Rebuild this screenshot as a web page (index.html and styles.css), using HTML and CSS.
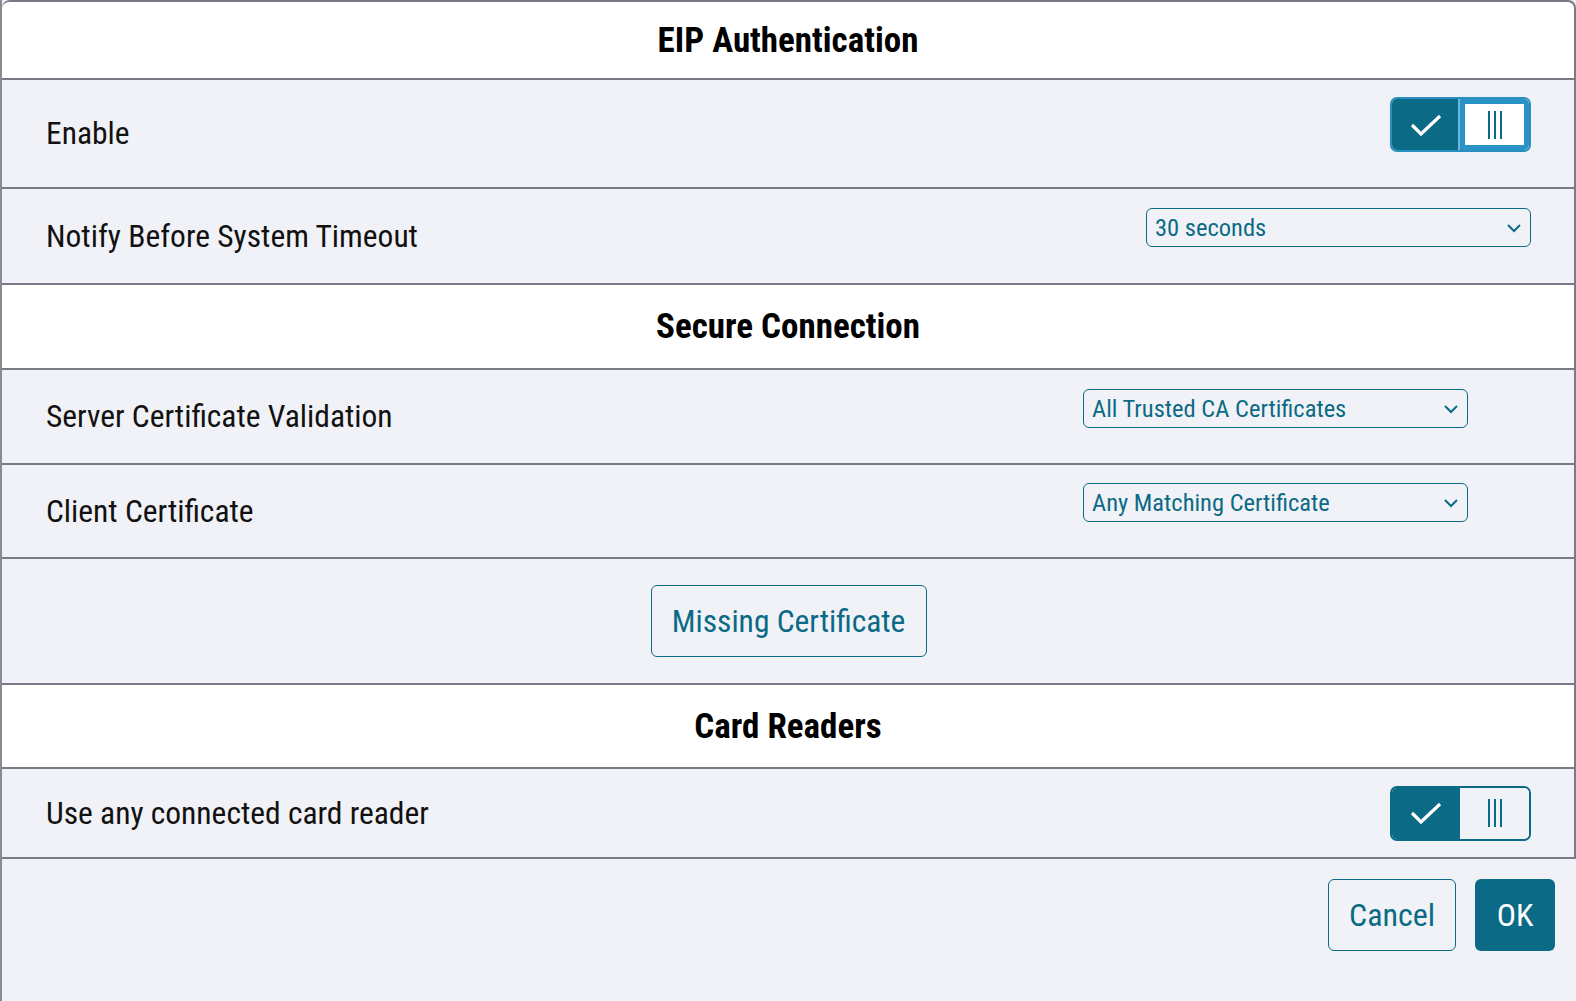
FILE: index.html
```html
<!DOCTYPE html>
<html lang="en">
<head>
  <meta charset="UTF-8">
  <title>EIP Authentication</title>
  <link rel="stylesheet" href="styles.css">
</head>
<body>
  <div class="dialog">
    <div class="panel">
      <div class="section-title first">EIP Authentication</div>
      <div class="row tall">
        <span class="label">Enable</span>
        <div class="toggle focused">
          <span class="toggle-on">
            <svg width="34" height="24" viewBox="0 0 34 24"><path d="M3 12 L12 21 L31 3" fill="none" stroke="#fff" stroke-width="3.2"/></svg>
          </span>
          <span class="toggle-off"><i></i><i></i><i></i></span>
        </div>
      </div>
      <div class="row">
        <span class="label">Notify Before System Timeout</span>
        <div class="select wide">
          <span>30 seconds</span>
          <svg class="caret" width="16" height="10" viewBox="0 0 16 10"><path d="M2 2 L8 8 L14 2" fill="none" stroke="#0b6a85" stroke-width="2"/></svg>
        </div>
      </div>

      <div class="section-title">Secure Connection</div>
      <div class="row mid">
        <span class="label">Server Certificate Validation</span>
        <div class="select indented">
          <span>All Trusted CA Certificates</span>
          <svg class="caret" width="16" height="10" viewBox="0 0 16 10"><path d="M2 2 L8 8 L14 2" fill="none" stroke="#0b6a85" stroke-width="2"/></svg>
        </div>
      </div>
      <div class="row short">
        <span class="label">Client Certificate</span>
        <div class="select indented">
          <span>Any Matching Certificate</span>
          <svg class="caret" width="16" height="10" viewBox="0 0 16 10"><path d="M2 2 L8 8 L14 2" fill="none" stroke="#0b6a85" stroke-width="2"/></svg>
        </div>
      </div>
      <div class="row center">
        <button class="btn outline big">Missing Certificate</button>
      </div>

      <div class="section-title small">Card Readers</div>
      <div class="row last">
        <span class="label">Use any connected card reader</span>
        <div class="toggle">
          <span class="toggle-on">
            <svg width="34" height="24" viewBox="0 0 34 24"><path d="M3 12 L12 21 L31 3" fill="none" stroke="#fff" stroke-width="3.2"/></svg>
          </span>
          <span class="toggle-off"><i></i><i></i><i></i></span>
        </div>
      </div>
    </div>

    <div class="actions">
      <button class="btn outline">Cancel</button>
      <button class="btn primary">OK</button>
    </div>
  </div>
</body>
</html>
```

FILE: styles.css
```css
* {
  margin: 0;
  padding: 0;
  box-sizing: border-box;
}

body {
  width: 1576px;
  height: 1001px;
  background-color: #f1f2f7;
  font-family: "Roboto Condensed", Roboto, "Liberation Sans", sans-serif;
  color: #111;
  overflow: hidden;
}

.dialog {
  height: 1001px;
  border-left: 2px solid #8a8a96;
}

.panel {
  border: 2px solid #7b7b87;
  border-left: 0;
  border-top-right-radius: 8px;
  border-top-left-radius: 8px;
}

.section-title {
  background-color: #fff;
  height: 85px;
  display: flex;
  justify-content: center;
  align-items: center;
  font-size: 35px;
  font-weight: bold;
  color: #000;
  border-bottom: 2px solid #7b7b87;
}

.section-title.first {
  height: 78px;
  border-top-left-radius: 8px;
  border-top-right-radius: 8px;
}

.section-title.small {
  height: 84px;
}

.row {
  height: 96px;
  display: flex;
  align-items: center;
  justify-content: space-between;
  padding: 0 43px 0 44px;
  border-bottom: 2px solid #7b7b87;
}

.row.tall {
  height: 109px;
}

.row.mid {
  height: 95px;
}

.row.short {
  height: 94px;
}

.row.center {
  height: 126px;
  justify-content: center;
}

.row.last {
  height: 88px;
  border-bottom: 0;
}

.label {
  font-size: 31.5px;
}

/* toggle switch */
.toggle {
  width: 141px;
  height: 55px;
  display: flex;
  border: 2px solid #0b6a85;
  border-radius: 7px;
  overflow: hidden;
}

.toggle-on {
  width: 68px;
  background-color: #0b6a85;
  display: flex;
  justify-content: center;
  align-items: center;
}

.toggle-off {
  flex: 1;
  background-color: #f1f2f7;
  display: flex;
  justify-content: center;
  align-items: center;
  gap: 4px;
}

.toggle-off i {
  width: 2px;
  height: 28px;
  background-color: #0b6a85;
}

.toggle.focused {
  align-self: flex-start;
  margin-top: 17px;
  border-color: #2a8fbf;
}

.toggle.focused .toggle-off {
  background-color: #fff;
  border: 5px solid #2a93c6;
  box-shadow: 0 0 0 2px #6cb7dc;
}

/* dropdowns */
.select {
  align-self: flex-start;
  margin-top: 19px;
  width: 385px;
  height: 39px;
  border: 1.5px solid #0b6a85;
  border-radius: 6px;
  display: flex;
  align-items: center;
  justify-content: space-between;
  padding: 0 8px 0 8px;
  color: #0b6a85;
  font-size: 24.5px;
}

.select.indented {
  margin-right: 63px;
}

.row.short .select {
  margin-top: 18px;
}

/* buttons */
.btn {
  font-family: inherit;
  font-size: 32px;
  height: 72px;
  border-radius: 6px;
  white-space: nowrap;
  cursor: pointer;
}

.btn.outline {
  background-color: transparent;
  border: 1.5px solid #0b6a85;
  color: #0b6a85;
  padding: 0 20px;
}

.btn.big {
  width: 276px;
  font-size: 31.5px;
}

.btn.primary {
  background-color: #0b6a85;
  border: 0;
  color: #fff;
  width: 80px;
}

.actions {
  display: flex;
  justify-content: flex-end;
  gap: 19px;
  padding: 20px 21px 0 0;
}

.actions .btn.outline {
  width: 128px;
}
```
